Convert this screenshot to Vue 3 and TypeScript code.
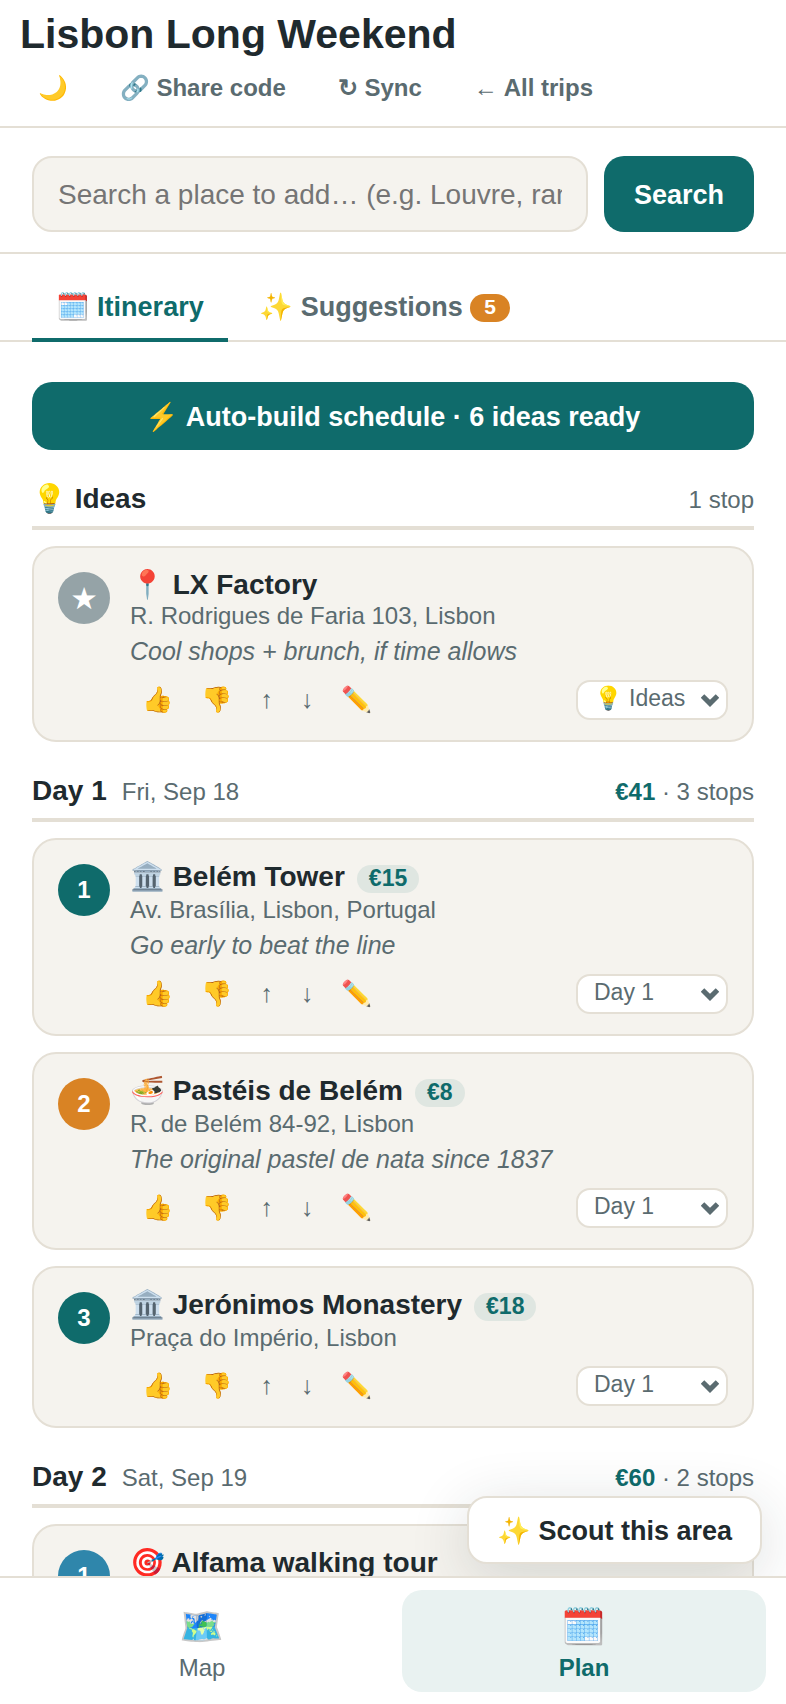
<script setup lang="ts">
import { ref } from 'vue'

interface Stop {
  marker: string
  tone: 'idea' | 'teal' | 'orange' | 'blue'
  title: string
  price?: string
  address?: string
  note?: string
  slot: string
}

interface Section {
  title: string
  date?: string
  cost?: string
  count: string
  stops: Stop[]
}

const slots: string[] = ['💡 Ideas', 'Day 1', 'Day 2']
const query = ref('')
const activeTab = ref<'itinerary' | 'suggestions'>('itinerary')

const sections = ref<Section[]>([
  {
    title: '💡 Ideas',
    count: '1 stop',
    stops: [
      {
        marker: '★',
        tone: 'idea',
        title: '📍 LX Factory',
        address: 'R. Rodrigues de Faria 103, Lisbon',
        note: 'Cool shops + brunch, if time allows',
        slot: '💡 Ideas',
      },
    ],
  },
  {
    title: 'Day 1',
    date: 'Fri, Sep 18',
    cost: '€41',
    count: '3 stops',
    stops: [
      {
        marker: '1',
        tone: 'teal',
        title: '🏛️ Belém Tower',
        price: '€15',
        address: 'Av. Brasília, Lisbon, Portugal',
        note: 'Go early to beat the line',
        slot: 'Day 1',
      },
      {
        marker: '2',
        tone: 'orange',
        title: '🍜 Pastéis de Belém',
        price: '€8',
        address: 'R. de Belém 84-92, Lisbon',
        note: 'The original pastel de nata since 1837',
        slot: 'Day 1',
      },
      {
        marker: '3',
        tone: 'teal',
        title: '🏛️ Jerónimos Monastery',
        price: '€18',
        address: 'Praça do Império, Lisbon',
        slot: 'Day 1',
      },
    ],
  },
  {
    title: 'Day 2',
    date: 'Sat, Sep 19',
    cost: '€60',
    count: '2 stops',
    stops: [{ marker: '1', tone: 'blue', title: '🎯 Alfama walking tour', slot: 'Day 2' }],
  },
])
</script>

<template>
  <div class="app">
    <header class="header">
      <h1>Lisbon Long Weekend</h1>
      <div class="header-actions">
        <button type="button">🌙</button>
        <button type="button">🔗 Share code</button>
        <button type="button">↻ Sync</button>
        <a href="#">← All trips</a>
      </div>
    </header>

    <form class="search" @submit.prevent>
      <input
        v-model="query"
        type="text"
        aria-label="Search a place to add"
        placeholder="Search a place to add… (e.g. Louvre, ramen)"
      />
      <button type="submit">Search</button>
    </form>

    <div class="tabs" role="tablist">
      <button
        type="button"
        role="tab"
        :class="{ active: activeTab === 'itinerary' }"
        :aria-selected="activeTab === 'itinerary'"
        @click="activeTab = 'itinerary'"
      >🗓️ Itinerary</button>
      <button
        type="button"
        role="tab"
        :class="{ active: activeTab === 'suggestions' }"
        :aria-selected="activeTab === 'suggestions'"
        @click="activeTab = 'suggestions'"
      >✨ Suggestions <span class="count">5</span></button>
    </div>

    <div class="stage">
      <main class="plan">
        <button type="button" class="auto-build">⚡ Auto-build schedule · 6 ideas ready</button>

        <section v-for="section in sections" :key="section.title">
          <div class="section-head">
            <h2>{{ section.title }}</h2>
            <span v-if="section.date" class="date">{{ section.date }}</span>
            <span class="summary">
              <template v-if="section.cost"><strong>{{ section.cost }}</strong> · </template>{{ section.count }}
            </span>
          </div>

          <article v-for="stop in section.stops" :key="stop.title" class="card">
            <div class="marker" :class="stop.tone">{{ stop.marker }}</div>
            <div class="body">
              <div class="title-row" :class="{ priced: stop.price }">
                <h3>{{ stop.title }}</h3>
                <span v-if="stop.price" class="price">{{ stop.price }}</span>
              </div>
              <p v-if="stop.address" class="address">{{ stop.address }}</p>
              <p v-if="stop.note" class="note">{{ stop.note }}</p>
              <div class="actions">
                <button type="button" aria-label="Vote up">👍</button>
                <button type="button" aria-label="Vote down">👎</button>
                <button type="button" aria-label="Move up">↑</button>
                <button type="button" aria-label="Move down">↓</button>
                <button type="button" aria-label="Edit">✏️</button>
                <div class="picker">
                  <select v-model="stop.slot" aria-label="Day">
                    <option v-for="slot in slots" :key="slot" :value="slot">{{ slot }}</option>
                  </select>
                  <svg viewBox="0 0 18 13" width="18" height="13" aria-hidden="true">
                    <path d="M1.5 2 9 9.4 16.5 2" fill="none" stroke="currentColor" stroke-width="5" />
                  </svg>
                </div>
              </div>
            </div>
          </article>
        </section>
      </main>
      <button type="button" class="scout">✨ Scout this area</button>
    </div>

    <nav class="bottom-nav">
      <button type="button"><span class="icon">🗺️</span><span>Map</span></button>
      <button type="button" class="current" aria-current="page">
        <span class="icon">🗓️</span><span>Plan</span>
      </button>
    </nav>
  </div>
</template>

<style>
body {
  background: #fff;
}
</style>

<style scoped>
.app {
  --ink: #1f2a2e;
  --muted: #5a6b70;
  --teal: #0f6b6b;
  --line: #e4dfd5;
  --paper: #f5f3ee;
  display: flex;
  flex-direction: column;
  height: 100vh;
  overflow: hidden;
  background: #fff;
  color: var(--ink);
  font-family: 'Liberation Sans', Arial, 'Noto Color Emoji', sans-serif;
}

.app *,
.app {
  box-sizing: border-box;
}

button,
input,
select {
  margin: 0;
  font-family: inherit;
}

button {
  border: 0;
  background: none;
  color: inherit;
  cursor: pointer;
}

h1,
h2,
h3,
p {
  margin: 0;
}

.header {
  padding: 10px 20px 20px;
  border-bottom: 2px solid var(--line);
}

h1 {
  font-size: 41px;
  line-height: 48px;
}

.header-actions {
  display: flex;
  gap: 16px;
  padding-top: 12px;
}

.header-actions button,
.header-actions a {
  padding: 0 18px;
  color: var(--muted);
  font-size: 24px;
  font-weight: 700;
  line-height: 36px;
  text-decoration: none;
  white-space: nowrap;
}

.search {
  display: flex;
  gap: 16px;
  padding: 28px 32px 20px;
  border-bottom: 2px solid var(--line);
}

.search input {
  flex: 1;
  min-width: 0;
  height: 76px;
  padding: 2px 24px 0;
  border: 2px solid var(--line);
  border-radius: 20px;
  background: var(--paper);
  color: var(--ink);
  font-size: 28px;
}

.search input::placeholder {
  color: #757575;
}

.search button {
  padding: 2px 30px 0;
  border-radius: 20px;
  background: var(--teal);
  color: #fff;
  font-size: 27px;
  font-weight: 700;
}

.tabs {
  display: flex;
  gap: 8px;
  padding: 20px 32px 0;
  border-bottom: 2px solid var(--line);
}

.tabs button {
  margin-bottom: -2px;
  padding: 17px 24px 15px;
  border-bottom: 4px solid transparent;
  color: var(--muted);
  font-size: 27px;
  font-weight: 700;
  line-height: 32px;
}

.tabs button.active {
  border-color: var(--teal);
  color: var(--teal);
}

.count {
  display: inline-block;
  padding: 0 14px 2px;
  border-radius: 14px;
  background: #d98324;
  color: #fff;
  font-size: 21px;
  line-height: 26px;
  vertical-align: 2px;
}

.stage {
  position: relative;
  flex: 1;
  min-height: 0;
}

.plan {
  height: 100%;
  padding: 40px 32px 0;
  overflow-y: auto;
  scrollbar-width: none;
}

.auto-build {
  display: block;
  width: 100%;
  padding: 19px 24px 17px;
  border-radius: 20px;
  background: var(--teal);
  color: #fff;
  font-size: 27px;
  font-weight: 700;
  line-height: 32px;
}

.section-head {
  display: flex;
  align-items: baseline;
  gap: 15px;
  margin-top: 32px;
  padding-bottom: 10px;
  border-bottom: 4px solid var(--line);
}

h2 {
  font-size: 28px;
  line-height: 34px;
}

.date,
.summary {
  color: var(--muted);
  font-size: 24px;
  line-height: 28px;
}

.summary {
  margin-left: auto;
}

.summary strong {
  color: var(--teal);
}

.card {
  display: flex;
  align-items: flex-start;
  gap: 20px;
  margin-top: 16px;
  padding: 20px 24px;
  border: 2px solid var(--line);
  border-radius: 24px;
  background: var(--paper);
}

.marker {
  flex: none;
  width: 52px;
  height: 52px;
  margin-top: 4px;
  border-radius: 50%;
  color: #fff;
  font-size: 24px;
  font-weight: 700;
  line-height: 52px;
  text-align: center;
}

.marker.idea {
  background: #95a3a7;
  font-size: 27px;
  line-height: 54px;
}

.marker.teal {
  background: var(--teal);
}

.marker.orange {
  background: #d98324;
}

.marker.blue {
  background: #2f86ab;
}

.body {
  flex: 1;
  min-width: 0;
}

.title-row {
  display: flex;
  align-items: baseline;
  gap: 12px;
  height: 34px;
}

.title-row.priced {
  height: 36px;
}

h3 {
  font-size: 28px;
  line-height: 34px;
}

.price {
  padding: 0 12px 2px;
  border-radius: 14px;
  background: #dfe6e1;
  color: var(--teal);
  font-size: 23px;
  font-weight: 700;
  line-height: 26px;
}

.address,
.note {
  color: var(--muted);
  font-size: 24px;
  line-height: 28px;
}

.note {
  padding-bottom: 2px;
  margin-top: 8px;
  font-size: 25px;
  font-style: italic;
  line-height: 26px;
}

.actions {
  display: flex;
  align-items: center;
  gap: 4px;
  margin-top: 14px;
}

.actions button {
  padding: 0 12px 2px;
  color: var(--muted);
  font-size: 25px;
  line-height: 38px;
}

.picker {
  position: relative;
  margin-left: auto;
  color: var(--muted);
}

.picker select {
  display: block;
  width: 152px;
  height: 40px;
  padding: 0 28px 4px 16px;
  border: 2px solid var(--line);
  border-radius: 14px;
  appearance: none;
  background: #fff;
  color: inherit;
  font-size: 23px;
}

.picker svg {
  position: absolute;
  top: 14px;
  right: 9px;
  pointer-events: none;
}

.scout {
  position: absolute;
  right: 24px;
  bottom: 12px;
  padding: 17px 28px 15px;
  border: 2px solid var(--line);
  border-radius: 20px;
  background: #fff;
  box-shadow: 0 12px 60px rgba(31, 42, 46, 0.16);
  font-size: 27px;
  font-weight: 700;
  line-height: 32px;
}

.bottom-nav {
  position: relative;
  display: flex;
  gap: 18px;
  padding: 12px 20px;
  border-top: 2px solid var(--line);
  background: #fff;
}

.bottom-nav button {
  display: flex;
  flex: 1;
  flex-direction: column;
  align-items: center;
  gap: 4px;
  padding: 14px 0 10px;
  border-radius: 20px;
  color: var(--muted);
  font-size: 24px;
  line-height: 28px;
}

.bottom-nav .icon {
  font-size: 36px;
  line-height: 46px;
}

.bottom-nav .current {
  background: #e9f2f1;
  color: var(--teal);
  font-weight: 700;
}
</style>
